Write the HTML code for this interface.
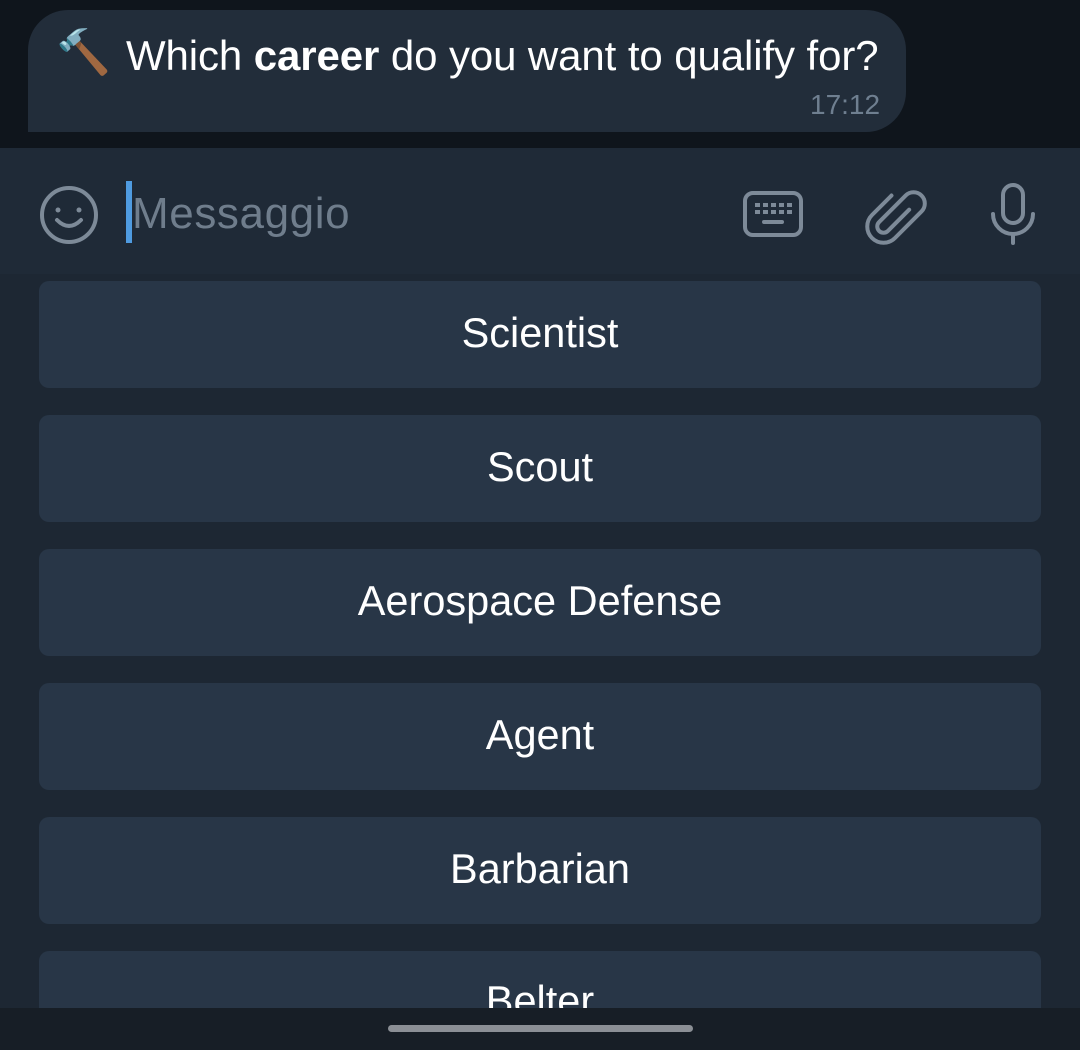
<!DOCTYPE html>
<html><head><meta charset="utf-8"><style>
*{margin:0;padding:0;box-sizing:border-box}
html,body{width:1080px;height:1050px;overflow:hidden;background:#1d2733}
body{font-family:"Liberation Sans",sans-serif;position:relative}
.top{position:absolute;left:0;top:0;width:1080px;height:148px;background:#0f151c}
.bubble{position:absolute;left:28px;top:10px;width:878px;height:122px;background:#222d3a;border-radius:40px 40px 40px 0}
.msg{position:absolute;left:126px;top:33px;font-size:42px;color:#fff;line-height:46px;white-space:nowrap;letter-spacing:-0.1px}
.ham{position:absolute;left:56px;top:28px;font-size:44px;line-height:50px}
.time{position:absolute;left:810px;top:89px;font-size:28px;color:#6f7f90}
.bar{position:absolute;left:0;top:148px;width:1080px;height:126px;background:#1f2a37}
.ph{position:absolute;left:132px;top:189px;font-size:44px;color:#6f7d8c;line-height:50px;letter-spacing:0.6px}
.caret{position:absolute;left:126px;top:181px;width:6px;height:62px;background:#4f9be0}
.btn{position:absolute;left:39px;width:1002px;height:107px;background:#283647;border-radius:10px;color:#fff;font-size:41.5px;text-align:center;line-height:103px}
.nav{position:absolute;left:0;top:1008px;width:1080px;height:42px;background:#171e26}
.handle{position:absolute;left:388px;top:1025px;width:305px;height:7px;border-radius:4px;background:#8b8f95}
svg{position:absolute;overflow:visible}
</style></head><body>
<div class="top"></div>
<div class="bubble"></div>
<div class="ham">🔨</div>
<div class="msg">Which <b>career</b> do you want to qualify for?</div>
<div class="time">17:12</div>
<div class="bar"></div>
<svg style="left:38px;top:184px" width="62" height="62" viewBox="0 0 62 62" fill="none" stroke="#7d8a98" stroke-width="4"><circle cx="31" cy="31" r="27"/><path d="M19 36 Q31 48 43 36" stroke-linecap="round"/><circle cx="20" cy="26" r="2.5" fill="#7d8a98" stroke="none"/><circle cx="41" cy="26" r="2.5" fill="#7d8a98" stroke="none"/></svg>
<div class="caret"></div>
<div class="ph">Messaggio</div>
<svg style="left:742px;top:190px" width="62" height="50" viewBox="0 0 62 50" fill="none" stroke="#7d8a98" stroke-width="4"><rect x="3" y="3" width="56" height="42" rx="8"/><g fill="#7d8a98" stroke="none"><rect x="13" y="13" width="5" height="4"/><rect x="21" y="13" width="5" height="4"/><rect x="29" y="13" width="5" height="4"/><rect x="37" y="13" width="5" height="4"/><rect x="45" y="13" width="5" height="4"/><rect x="13" y="20" width="5" height="4"/><rect x="21" y="20" width="5" height="4"/><rect x="29" y="20" width="5" height="4"/><rect x="37" y="20" width="5" height="4"/><rect x="45" y="20" width="5" height="4"/><rect x="20" y="30" width="22" height="4" rx="2"/></g></svg>
<svg style="left:864px;top:184px" width="62" height="62" viewBox="0 0 62 62" fill="none" stroke="#7d8a98" stroke-width="3.2" stroke-linecap="round"><g transform="translate(31 31) scale(1.25) rotate(45) translate(-31 -31)"><path d="M36 20 V44 a5 5 0 0 1 -10 0 V14 a9 9 0 0 1 18 0 V44 a13 13 0 0 1 -26 0 V22"/></g></svg>
<svg style="left:988px;top:182px" width="50" height="64" viewBox="0 0 50 64" fill="none" stroke="#7d8a98" stroke-width="4" stroke-linecap="round"><rect x="15" y="3" width="20" height="38" rx="10"/><path d="M5 32 a20 20 0 0 0 40 0"/><path d="M25 52 V61"/></svg>
<div class="btn" style="top:281px">Scientist</div>
<div class="btn" style="top:415px">Scout</div>
<div class="btn" style="top:549px">Aerospace Defense</div>
<div class="btn" style="top:683px">Agent</div>
<div class="btn" style="top:817px">Barbarian</div>
<div class="btn" style="top:951px;line-height:100px">Belter</div>
<div class="nav"></div>
<div class="handle"></div>
</body></html>
